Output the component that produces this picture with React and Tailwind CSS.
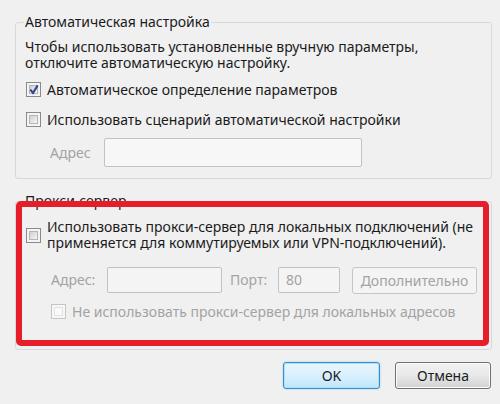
import React from 'react';

const Checkbox = ({ checked = false, disabled = false }) => (
  <div
    className={
      'w-[15px] h-[15px] shrink-0 border p-[2px] ' +
      (disabled ? 'border-[#c5c5c5] bg-[#f7f7f7]' : 'border-[#8a8a8a] bg-[#f4f4f4]')
    }
  >
    <div
      className={
        'w-full h-full relative ' +
        (disabled
          ? 'bg-[#fafafa] border border-[#e2e2e2]'
          : 'bg-gradient-to-br from-[#cfcfcf] to-[#f6f6f6] border border-[#b5b5b5]')
      }
    >
      {checked && (
        <svg viewBox="0 0 9 9" className="absolute -left-[1px] -top-[2px] w-[10px] h-[11px]">
          <path d="M1.2 4.6 L3.6 7.6 L7.8 0.8" fill="none" stroke="#2b4595" strokeWidth="1.8" />
        </svg>
      )}
    </div>
  </div>
);

const TextBox = ({ className = '', children }) => (
  <div
    className={
      'border border-[#c2c2c2] rounded-[2px] flex items-center text-[#a3a3a3] ' + className
    }
  >
    {children}
  </div>
);

export default function App() {
  return (
    <div className="w-[500px] h-[404px] bg-[#f0f0f0] text-[#1b1b1b] pt-[13px] pl-[15px] pr-[8px] text-[14px] font-['Noto_Sans','Open_Sans',sans-serif] overflow-hidden">
      {/* Automatic configuration */}
      <fieldset className="w-[477px] border border-[#d5d9dc] rounded-[3px] pl-[10px] pb-[11px]">
        <legend className="leading-[18px] -ml-[2px] px-[1px]">Автоматическая настройка</legend>
        <div className="mt-[8px] -ml-[1px]">
          <div className="h-[16px] leading-[16px]">Чтобы использовать установленные вручную параметры,</div>
          <div className="h-[16px] leading-[16px]">отключите автоматическую настройку.</div>
        </div>
        <div className="mt-[10px] h-[17px] flex items-center gap-[6px]">
          <Checkbox checked />
          <span className="leading-[17px]">Автоматическое определение параметров</span>
        </div>
        <div className="mt-[13px] h-[17px] flex items-center gap-[6px]">
          <Checkbox />
          <span className="leading-[17px]">Использовать сценарий автоматической настройки</span>
        </div>
        <div className="mt-[10px] flex items-center pl-[24px]">
          <span className="w-[54px] text-[#a3a3a3]">Адрес</span>
          <TextBox className="w-[258px] h-[29px] bg-[#f7f7f7]" />
        </div>
      </fieldset>

      {/* Proxy server */}
      <fieldset className="mt-[13px] w-[477px] border border-[#d5d9dc] rounded-[3px] pb-[3px]">
        <legend className="leading-[18px] ml-[8px] px-[1px]">Прокси-сервер</legend>
        <div className="relative z-10 -mt-[9px] w-[473px] border-[6px] border-[#e61e2a] rounded-[5px] pt-[12px] pb-[20px]">
          <div className="flex items-center gap-[6px] pl-[4px]">
            <Checkbox />
            <div>
              <div className="h-[16px] leading-[16px]">
                Использовать прокси-сервер для локальных подключений (не
              </div>
              <div className="h-[16px] leading-[16px]">
                применяется для коммутируемых или VPN-подключений).
              </div>
            </div>
          </div>
          <div className="mt-[14px] flex items-center pl-[29px] text-[#a3a3a3]">
            <span className="w-[56px]">Адрес:</span>
            <TextBox className="w-[115px] h-[26px] bg-[#f4f4f4]" />
            <span className="ml-[8px] w-[48px]">Порт:</span>
            <TextBox className="w-[62px] h-[26px] bg-[#f4f4f4] pl-[7px]">80</TextBox>
            <div className="ml-[12px] mt-[2px] w-[125px] h-[27px] border border-[#c6c6c6] rounded-[3px] bg-[#f4f4f4] flex items-center justify-center">
              Дополнительно
            </div>
          </div>
          <div className="mt-[9px] h-[17px] flex items-center gap-[6px] pl-[29px] text-[#a3a3a3]">
            <Checkbox disabled />
            <span className="leading-[17px]">Не использовать прокси-сервер для локальных адресов</span>
          </div>
        </div>
      </fieldset>

      {/* Dialog buttons */}
      <div className="mt-[12px] mr-[1px] flex justify-end gap-[15px]">
        <button className="w-[97px] h-[27px] rounded-[3px] border border-[#3d8bc7] bg-gradient-to-b from-[#eaf6fd] via-[#d9f0fc] to-[#bee6fd] shadow-[inset_0_0_0_1px_#a8e3fb,0_0_2px_#8ecbf0] flex items-center justify-center">
          OK
        </button>
        <button className="w-[96px] h-[27px] rounded-[3px] border border-[#707070] bg-gradient-to-b from-[#f2f2f2] via-[#e8e8e8] to-[#d2d2d2] shadow-[inset_0_0_0_1px_#fcfcfc] flex items-center justify-center">
          Отмена
        </button>
      </div>
    </div>
  );
}
